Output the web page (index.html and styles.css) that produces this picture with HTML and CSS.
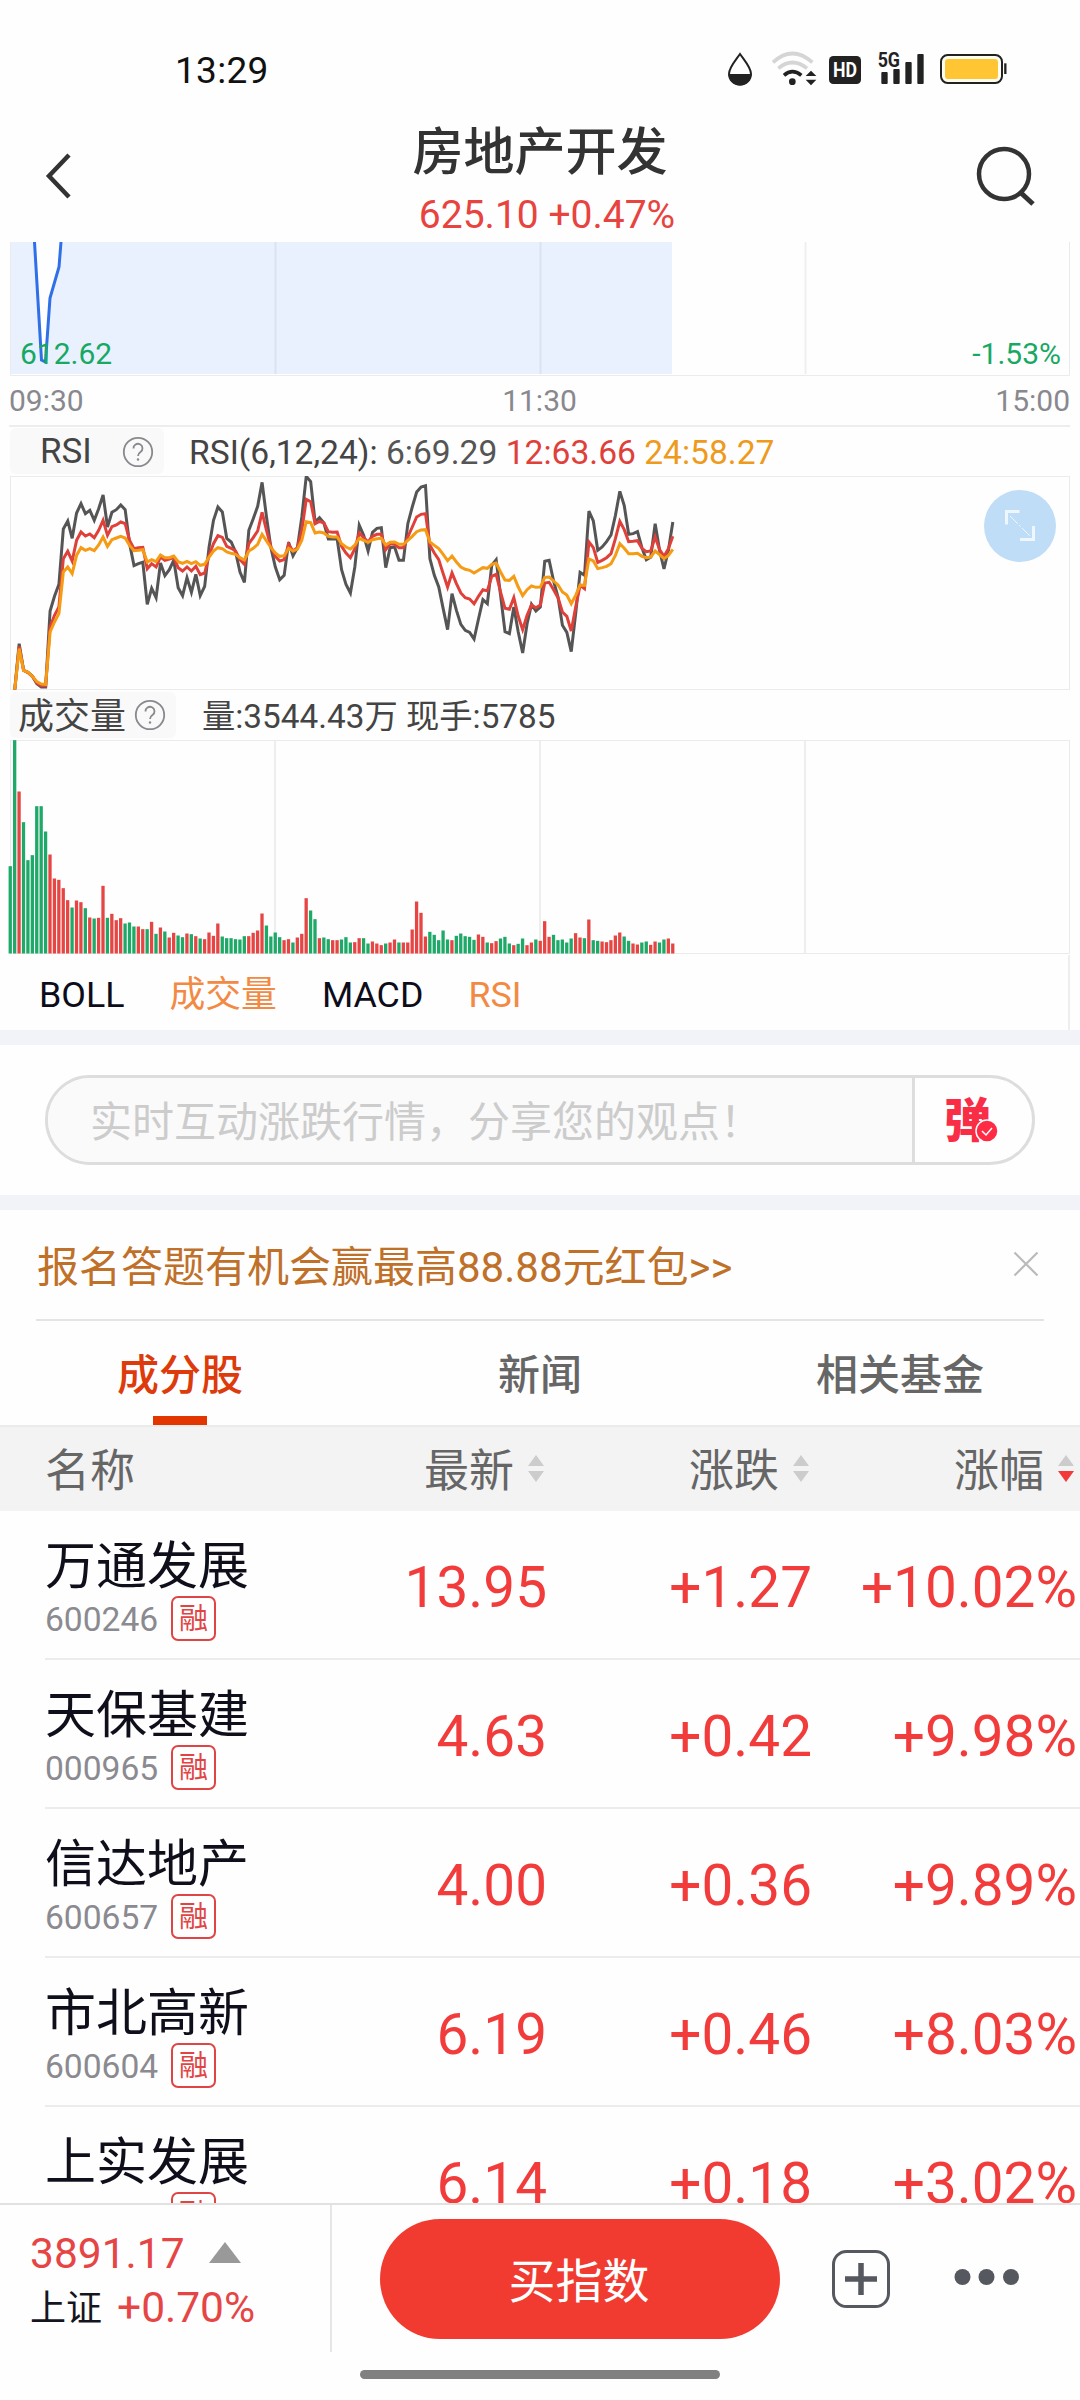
FILE: index.html
```html
<!DOCTYPE html>
<html lang="zh-CN">
<head>
    <meta charset="UTF-8">
    <meta name="viewport" content="width=device-width, initial-scale=1.0">
    <title>房地产开发</title>
    <link rel="stylesheet" href="styles.css">
</head>
<body>
    <div class="phone">
        <div class="status-bar">
            <span class="clock">13:29</span>
            <svg class="status-icons" width="330" height="80" viewBox="0 0 990 240">
                <path d="M120 72 C108 90 87 112 87 132 A33 32 0 0 0 153 132 C153 112 132 90 120 72Z" fill="#fff" stroke="#222" stroke-width="6"/>
                <path d="M86 132 A34 34 0 0 0 154 132Z" fill="#222"/>
                <g fill="none" stroke-width="11">
                    <path d="M219 97 Q277 44 337 97" stroke="#d5d5d5"/>
                    <path d="M235 115 Q277 80 321 115" stroke="#d5d5d5"/>
                    <path d="M252 136 Q277 114 304 136" stroke="#222"/>
                </g>
                <circle cx="277" cy="155" r="10" fill="#222"/>
                <path d="M333 122 L349 138 H317Z M333 166 L349 149 H317Z" fill="#222"/>
                <rect x="387" y="78" width="96" height="84" rx="13" fill="#222"/>
                <text x="435" y="142" class="hd-text" textLength="72" lengthAdjust="spacingAndGlyphs">HD</text>
                <text x="533" y="110" class="net-text" textLength="67" lengthAdjust="spacingAndGlyphs">5G</text>
                <g fill="#222">
                    <rect x="544" y="126" width="19" height="36" rx="3"/>
                    <rect x="580" y="117" width="19" height="45" rx="3"/>
                    <rect x="616" y="96" width="19" height="66" rx="3"/>
                    <rect x="652" y="72" width="19" height="90" rx="3"/>
                </g>
                <rect x="723" y="75" width="183" height="84" rx="20" fill="#fffdf0" stroke="#222" stroke-width="6"/>
                <rect x="735" y="87" width="159" height="60" rx="10" fill="#ffc533"/>
                <path d="M916 100 V132" stroke="#222" stroke-width="7"/>
            </svg>
        </div>

        <div class="header">
            <svg class="icon-back" width="30" height="52" viewBox="0 0 30 52">
                <path d="M25 5 L5 26 L25 47" fill="none" stroke="#333" stroke-width="4.5"/>
            </svg>
            <div class="header-title">
                <h1>房地产开发</h1>
                <p>625.10 +0.47%</p>
            </div>
            <svg class="icon-search" width="64" height="64" viewBox="0 0 64 64">
                <circle cx="30" cy="31" r="25" fill="none" stroke="#333" stroke-width="4.5"/>
                <path d="M46 49 L59 61" stroke="#333" stroke-width="5"/>
            </svg>
        </div>

        <div class="charts">
            <div class="price-chart">
                <svg width="1060" height="134" viewBox="0 0 1060 134">
                    <path d="M0 0 H24.5 L31.5 118 L35.5 120 L40 56 L49 25 L51 0 H662 V132 H0Z" fill="#e9f1ff"/>
                    <path d="M265.500 0 V132 M530.500 0 V132 M795.500 0 V132" stroke="#000" stroke-opacity="0.06" stroke-width="2"/>
                    <path d="M0.500 0 V133.500 H1059.500 V0" fill="none" stroke="#ebebeb"/>
                    <path d="M24.500 0 L31.500 118 L35.500 120 L40 56 L49 25 L51 0" fill="none" stroke="#2f6fe8" stroke-width="3"/>
                </svg>
                <span class="low">612.62</span>
                <span class="low-rate">-1.53%</span>
            </div>
            <div class="time-axis">
                <span>09:30</span><span>11:30</span><span>15:00</span>
            </div>

            <div class="indicator-head">
                <div class="indicator-name rsi-name">
                    RSI
                    <svg width="32" height="32" viewBox="0 0 32 32"><circle cx="16" cy="16" r="14.200"/><path d="M11.500 12.500 A4.500 4.500 0 1 1 18.500 16 Q16 17.700 16 20"/><circle class="dot" cx="16" cy="23.500" r="1.200"/></svg>
                </div>
                <p class="rsi-values">RSI(6,12,24): <span class="grey">6:69.29</span> <span class="red">12:63.66</span> <span class="orange">24:58.27</span></p>
            </div>
            <div class="rsi-chart">
                <svg id="rsiChart" width="1060" height="214" viewBox="30 47 3180 642"></svg>
                <div class="expand-btn">
                    <svg width="36" height="36" viewBox="0 0 36 36">
                        <path d="M17.500 3.500 H4.500 V16.500 M31.500 18 V31.500 H18" fill="none" stroke="#eef7ff" stroke-width="3"/>
                        <path d="M8 8 L28 28" stroke="#eef7ff" stroke-width="1" stroke-dasharray="11 2 2 2"/>
                    </svg>
                </div>
            </div>

            <div class="indicator-head volume-head">
                <div class="indicator-name volume-name">
                    <span>成交量</span>
                    <svg width="32" height="32" viewBox="0 0 32 32"><circle cx="16" cy="16" r="14.200"/><path d="M11.500 12.500 A4.500 4.500 0 1 1 18.500 16 Q16 17.700 16 20"/><circle class="dot" cx="16" cy="23.500" r="1.200"/></svg>
                </div>
                <p>量:3544.43万 现手:5785</p>
            </div>
            <div class="volume-chart">
                <svg id="volumeChart" width="1064" height="214" viewBox="-4 0 1064 214">
                    <path d="M265 0 V213 M530 0 V213 M795 0 V213" stroke="#eee" stroke-width="2"/>
                    <rect x="0.500" y="0.500" width="1059" height="213" fill="none" stroke="#ebebeb"/>
                </svg>
            </div>

            <div class="indicator-tabs">
                <span>BOLL</span>
                <span class="active">成交量</span>
                <span>MACD</span>
                <span class="active">RSI</span>
            </div>
        </div>

        <div class="comment-section">
            <div class="comment-box">
                <div class="comment-input">实时互动涨跌行情，分享您的观点！</div>
                <div class="danmu">
                    <span>弹</span>
                    <svg width="24" height="24" viewBox="0 0 24 24">
                        <circle cx="12" cy="12" r="11" fill="#ff2b45" stroke="#fff" stroke-width="1.500"/>
                        <path d="M7 12 L11 16 L17 9" fill="none" stroke="#fff" stroke-width="1.500"/>
                    </svg>
                </div>
            </div>
        </div>

        <div class="promo">
            <span>报名答题有机会赢最高88.88元红包&gt;&gt;</span>
            <svg width="26" height="26" viewBox="0 0 26 26"><path d="M1.500 1.500 L24.500 24.500 M24.500 1.500 L1.500 24.500" stroke="#bbb" stroke-width="2.200"/></svg>
        </div>

        <div class="tabs">
            <div class="tab active">成分股</div>
            <div class="tab">新闻</div>
            <div class="tab">相关基金</div>
        </div>

        <div class="list-head">
            <span>名称</span>
            <span class="sort">最新<i class="arrows"></i></span>
            <span class="sort">涨跌<i class="arrows"></i></span>
            <span class="sort">涨幅<i class="arrows desc"></i></span>
        </div>

        <div class="stock-list">
            <div class="stock-row">
                <div class="stock-name"><h3>万通发展</h3><p>600246<em>融</em></p></div>
                <span>13.95</span><span>+1.27</span><span>+10.02%</span>
            </div>
            <div class="stock-row">
                <div class="stock-name"><h3>天保基建</h3><p>000965<em>融</em></p></div>
                <span>4.63</span><span>+0.42</span><span>+9.98%</span>
            </div>
            <div class="stock-row">
                <div class="stock-name"><h3>信达地产</h3><p>600657<em>融</em></p></div>
                <span>4.00</span><span>+0.36</span><span>+9.89%</span>
            </div>
            <div class="stock-row">
                <div class="stock-name"><h3>市北高新</h3><p>600604<em>融</em></p></div>
                <span>6.19</span><span>+0.46</span><span>+8.03%</span>
            </div>
            <div class="stock-row">
                <div class="stock-name"><h3>上实发展</h3><p><em>融</em></p></div>
                <span>6.14</span><span>+0.18</span><span>+3.02%</span>
            </div>
        </div>

        <div class="bottom-bar">
            <div class="market-index">
                <p>3891.17<i class="triangle"></i></p>
                <p><span>上证</span>+0.70%</p>
            </div>
            <button class="buy-btn">买指数</button>
            <svg class="icon-add" width="58" height="58" viewBox="0 0 58 58">
                <rect x="1.500" y="1.500" width="55" height="55" rx="13" fill="none" stroke="#55585f" stroke-width="3"/>
                <path d="M13 29 H45 M29 13 V45" stroke="#55585f" stroke-width="5.500"/>
            </svg>
            <svg class="icon-more" width="66" height="18" viewBox="0 0 66 18" fill="#55585f">
                <circle cx="8.500" cy="9" r="8"/><circle cx="32.500" cy="9" r="8"/><circle cx="57" cy="9" r="8"/>
            </svg>
        </div>
        <div class="home-area"><div class="home-bar"></div></div>
    </div>

    <script>
        // one value per minute, 240 minutes across the chart
        const rsi6 = [688,550,630,636,648,670,680,680,452,408,372,206,182,234,158,130,160,150,180,145,104,200,156,148,134,148,250,316,310,306,432,384,412,308,346,328,300,382,406,352,396,342,406,378,260,180,140,155,234,245,275,335,366,210,175,138,66,170,262,320,358,345,246,286,262,170,48,64,185,172,188,236,236,236,328,372,398,320,195,225,272,216,204,202,322,262,260,300,300,190,140,95,80,76,295,345,380,445,508,400,450,492,510,516,536,476,418,430,315,298,405,514,520,440,515,578,490,432,452,440,303,300,362,410,495,516,574,460,336,345,152,182,270,260,244,224,165,93,136,222,220,214,262,298,290,190,270,326,270,185];
        const rsi12 = [688,558,630,637,648,668,676,676,500,465,440,295,273,302,240,215,227,221,232,210,180,225,199,194,185,190,240,265,262,261,325,310,320,290,300,296,292,322,332,320,332,318,343,338,285,250,226,231,258,264,272,298,312,250,232,212,156,210,260,288,302,298,252,272,262,210,117,124,190,183,188,214,216,215,258,278,292,265,218,232,245,228,222,222,268,250,252,262,262,230,200,170,162,160,255,278,298,340,380,338,370,398,412,416,430,408,388,392,348,342,395,444,447,412,468,508,465,434,442,434,368,366,388,412,455,468,512,440,375,385,245,262,306,300,292,280,235,183,208,244,243,241,264,274,272,230,268,288,265,228];
        const rsi24 = [688,565,630,636,648,664,671,672,515,485,460,335,320,340,285,262,270,265,271,254,230,258,238,233,228,233,255,271,270,268,305,298,304,284,292,292,287,304,309,303,310,304,315,312,290,272,262,265,275,279,282,292,299,272,264,252,222,242,262,278,288,286,264,272,266,240,184,187,218,215,218,228,230,230,250,260,266,254,234,240,246,238,235,234,254,246,245,252,252,240,228,214,209,208,245,255,265,282,301,287,305,320,327,330,338,330,322,324,312,308,335,359,360,348,380,406,388,377,381,380,351,350,362,374,395,404,430,405,374,375,296,302,325,322,318,310,285,250,264,280,280,279,288,292,290,272,283,295,285,267];

        const step = 13.25;
        let rsiSvg = '<rect x="31.5" y="48.5" width="3177" height="639" fill="none" stroke="#ebebeb" stroke-width="3"/>';
        [[rsi6, "#555"], [rsi12, "#e0403a"], [rsi24, "#f59b14"]].forEach(([values, color]) => {
            const points = values.map((y, i) => `${31 + (i + 1) * step},${y}`).join(" ");
            rsiSvg += `<polyline points="${points}" fill="none" stroke="${color}" stroke-width="9"/>`;
        });
        document.getElementById("rsiChart").innerHTML = rsiSvg;

        const volume = "262g 640g 486r 394g 280g 295g 442g 442g 366g 297r 225r 221r 196r 160r 138g 159r 154r 136g 108r 105g 107r 203r 107g 119r 100r 106r 90g 93g 81g 81r 73r 73g 95r 59g 78r 66g 48r 62r 54g 49g 60r 58g 52r 45g 43r 63r 53r 90r 51g 46g 46g 43g 42g 52g 52r 62r 69r 120r 84g 51g 63g 49g 40r 43r 33g 48r 59r 166r 129g 103g 46r 48g 43g 40r 40r 42g 49g 33g 34r 46r 46g 30g 36r 30r 25r 30g 33r 42r 33g 33r 33r 72r 156r 122r 51r 65g 56g 40g 69g 42g 40r 53g 60g 52g 50g 41g 57r 50r 33g 31r 37r 45g 50g 30g 25r 29g 45g 25r 33r 42g 38r 97r 50r 56g 40g 42g 33g 45g 61r 48r 46g 102r 40g 38g 36r 34r 40r 54r 63r 51g 38g 30r 27r 33g 36g 26r 36r 33g 42g 45r 30r".split(" ");
        let bars = "";
        volume.forEach((v, i) => {
            const h = parseInt(v) / 3;
            const color = v.endsWith("g") ? "#1fa968" : "#e54644";
            bars += `<rect x="${(i * 1060 / 240 - 1.4).toFixed(2)}" y="${(213.5 - h).toFixed(2)}" width="3.3" height="${h.toFixed(2)}" fill="${color}"/>`;
        });
        document.getElementById("volumeChart").insertAdjacentHTML("beforeend", `<g>${bars}</g>`);
    </script>
</body>
</html>
```
FILE: styles.css
```css
* {
    box-sizing: border-box;
    margin: 0;
    padding: 0;
}
body {
    font-family: Roboto, "Noto Sans CJK SC", sans-serif;
    background: #fefefe;
}
svg {
    display: block;
    flex-shrink: 0;
}
.phone {
    width: 1080px;
    height: 2400px;
    display: flex;
    flex-direction: column;
    overflow: hidden;
    background: #fefefe;
}

/* status bar */
.status-bar {
    height: 110px;
    padding: 30px 50px 0 175px;
    display: flex;
    justify-content: space-between;
    flex-shrink: 0;
}
.clock {
    font-size: 37px;
    font-weight: 450;
    line-height: 81px;
    letter-spacing: 0.3px;
    color: #111;
}
.hd-text {
    font-size: 62px;
    font-weight: 700;
    fill: #fff;
    text-anchor: middle;
}
.net-text {
    font-size: 62px;
    font-weight: 700;
    fill: #222;
}

/* header */
.header {
    height: 132px;
    padding: 0 42px;
    display: flex;
    justify-content: space-between;
    flex-shrink: 0;
}
.icon-back {
    margin: 40px 0 0 2px;
}
.icon-search {
    margin-top: 33px;
}
.header-title {
    margin-left: 46px;
    display: flex;
    flex-direction: column;
    align-items: center;
}
.header-title h1 {
    font-size: 51px;
    font-weight: 500;
    line-height: 60px;
    margin: 13px 14px 0 0;
    color: #333;
}
.header-title p {
    font-size: 39px;
    line-height: 46px;
    margin-top: 9px;
    color: #e8433f;
}

/* charts */
.charts {
    height: 788px;
    padding-left: 10px;
    flex-shrink: 0;
}
.price-chart {
    position: relative;
    height: 134px;
    width: 1060px;
    font-size: 30px;
    color: #17a964;
}
.low, .low-rate {
    position: absolute;
    bottom: 4px;
    line-height: 36px;
}
.low {
    left: 10px;
}
.low-rate {
    right: 9px;
}
.time-axis {
    width: 1061px;
    height: 51px;
    margin-left: -1px;
    display: flex;
    justify-content: space-between;
    font-size: 30px;
    line-height: 49px;
    color: #88888e;
    border-bottom: 2px solid #ededed;
}
.indicator-head {
    display: flex;
    height: 49px;
    padding-top: 1px;
    font-size: 33.6px;
    line-height: 50px;
    color: #444;
}
.indicator-name {
    height: 46px;
    display: flex;
    align-items: center;
    justify-content: space-between;
    background: #f9f9f9;
    border-radius: 6px;
    line-height: 46px;
}
.indicator-name svg {
    fill: none;
    stroke: #88888e;
    stroke-width: 1.8;
}
.indicator-name svg .dot {
    fill: #88888e;
    stroke: none;
}
.rsi-name {
    width: 154px;
    font-size: 35px;
    padding: 2px 10px 0 30px;
}
.rsi-values {
    margin-left: 25px;
}
.grey { color: #555; }
.red { color: #e0403a; }
.orange { color: #ee9a1c; }
.rsi-chart {
    position: relative;
    width: 1060px;
    height: 214px;
}
.expand-btn {
    position: absolute;
    top: 14px;
    right: 14px;
    width: 72px;
    height: 72px;
    display: flex;
    align-items: center;
    justify-content: center;
    border-radius: 50%;
    background: #bfddf7;
}
.volume-head {
    height: 50px;
    padding-top: 2px;
    font-size: 33.3px;
}
.volume-name {
    width: 166px;
    font-size: 36px;
    padding: 0 10px 0 8px;
}
.volume-name span {
    padding-top: 4px;
}
.volume-head p {
    margin-left: 26px;
}
.volume-chart {
    height: 214px;
    margin-left: -4px;
}
.indicator-tabs {
    width: 1060px;
    height: 75px;
    padding-left: 29px;
    margin-top: 1px;
    display: flex;
    gap: 45px;
    font-size: 35.8px;
    line-height: 81px;
    color: #0c0c1a;
    border-right: 2px solid #eee;
}
.indicator-tabs .active {
    color: #f28a44;
}

/* comment input */
.comment-section {
    height: 180px;
    padding: 30px 45px;
    border-top: 15px solid #f2f3f8;
    border-bottom: 15px solid #f2f3f8;
    flex-shrink: 0;
}
.comment-box {
    height: 90px;
    display: flex;
    border: 3px solid #ddd;
    border-radius: 45px;
    overflow: hidden;
}
.comment-input {
    flex: 1;
    padding-left: 42px;
    font-size: 42px;
    line-height: 90px;
    color: #ccc;
    background: #fafafa;
    white-space: nowrap;
}
.danmu {
    position: relative;
    width: 120px;
    padding-left: 29px;
    border-left: 3px solid #ddd;
}
.danmu span {
    font-size: 47px;
    font-weight: 900;
    line-height: 86px;
    color: #f92d46;
}
.danmu svg {
    position: absolute;
    left: 60px;
    top: 41px;
}

/* promo */
.promo {
    height: 111px;
    margin: 0 36px;
    padding: 0 5px 3px 1px;
    display: flex;
    justify-content: space-between;
    align-items: center;
    font-size: 42px;
    color: #bf7029;
    border-bottom: 2px solid #e4e4e4;
    flex-shrink: 0;
}
.promo svg {
    margin-top: 2px;
}

/* tabs */
.tabs {
    display: flex;
    height: 106px;
    border-bottom: 2px solid #ebebeb;
    flex-shrink: 0;
}
.tab {
    position: relative;
    flex: 1;
    text-align: center;
    font-size: 42px;
    font-weight: 500;
    line-height: 109px;
    color: #666;
}
.tab.active {
    color: #dd3b0b;
}
.tab.active::after {
    content: "";
    position: absolute;
    left: 153px;
    bottom: 0;
    width: 54px;
    height: 9px;
    background: #e23500;
}

/* stock list */
.list-head {
    display: grid;
    grid-template-columns: 227px 265px 265px 265px;
    height: 84px;
    padding-left: 45px;
    font-size: 45px;
    line-height: 90px;
    color: #666;
    background: #f3f3f3;
    flex-shrink: 0;
}
.sort {
    display: flex;
    justify-content: flex-end;
}
.arrows {
    width: 16px;
    height: 27px;
    margin: 28px -7px 0 14px;
    display: flex;
    flex-direction: column;
    justify-content: space-between;
}
.arrows::before, .arrows::after {
    content: "";
    border-left: 8px solid transparent;
    border-right: 8px solid transparent;
}
.arrows::before {
    border-bottom: 11px solid #ccc;
}
.arrows::after {
    border-top: 11px solid #ccc;
}
.arrows.desc::after {
    border-top-color: #f33a3a;
}
.stock-list {
    flex: 1;
    overflow: hidden;
}
.stock-row {
    display: grid;
    grid-template-columns: 237px 265px 265px 265px;
    height: 149px;
    margin-left: 45px;
    border-bottom: 2px solid #ececec;
}
.stock-row > span {
    font-size: 56.7px;
    line-height: 154px;
    height: 147px;
    text-align: right;
    white-space: nowrap;
    color: #f23c3c;
}
.stock-name h3 {
    font-size: 51px;
    font-weight: 400;
    line-height: 60px;
    padding-top: 26px;
    white-space: nowrap;
    color: #0f0f1b;
}
.stock-name p {
    display: flex;
    justify-content: space-between;
    width: 171px;
    height: 45px;
    margin-top: -1px;
    font-size: 33.6px;
    line-height: 47px;
    color: #8a8a90;
}
.stock-name em {
    width: 45px;
    height: 45px;
    margin-left: auto;
    border: 2px solid #e04545;
    border-radius: 7px;
    font-size: 29px;
    font-style: normal;
    line-height: 43px;
    text-align: center;
    color: #e04545;
}

/* bottom bar */
.bottom-bar {
    display: flex;
    height: 149px;
    border-top: 2px solid #e1e1e1;
    flex-shrink: 0;
}
.market-index {
    width: 332px;
    padding: 22px 0 0 30px;
    border-right: 2px solid #e6e6e6;
    font-size: 42.5px;
    line-height: 54px;
    color: #e64545;
}
.market-index p {
    display: flex;
    align-items: center;
}
.market-index span {
    margin-right: 15px;
    padding-top: 3px;
    line-height: 51px;
    font-size: 36px;
    color: #15151f;
}
.triangle {
    margin: 0 0 4px 24px;
    border-left: 16px solid transparent;
    border-right: 16px solid transparent;
    border-bottom: 21px solid #999;
}
.buy-btn {
    width: 400px;
    height: 120px;
    margin: 14px 0 0 48px;
    padding: 0 2px 3px 0;
    border: none;
    border-radius: 60px;
    background: #f13b31;
    color: #fff;
    font-family: inherit;
    font-size: 47px;
}
.icon-add {
    margin: 45px 0 0 52px;
}
.icon-more {
    margin: 63px 0 0 64px;
}
.home-area {
    height: 48px;
    padding-top: 18px;
    flex-shrink: 0;
}
.home-bar {
    width: 360px;
    height: 9px;
    margin: 0 auto;
    border-radius: 5px;
    background: #808080;
}
```
